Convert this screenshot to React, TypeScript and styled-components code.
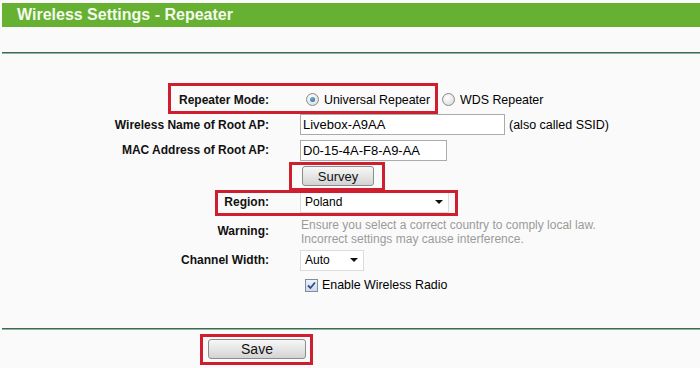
import React from "react";
import styled, { createGlobalStyle } from "styled-components";

const Global = createGlobalStyle`
  html, body { margin: 0; padding: 0; background: #fafafa; }
  body { font-family: "Liberation Sans", Arial, sans-serif; font-size: 12px; color: #000; }
`;

const Page = styled.div`
  position: relative;
  width: 700px;
  height: 368px;
  overflow: hidden;
  background: #fafafa;
`;

const TitleBar = styled.div`
  margin: 3px 0 0 2px;
  height: 24px;
  background: #66b132;
  display: flex;
  align-items: center;
  padding-left: 15px;
  color: #f4faee;
  font-weight: bold;
  font-size: 16px;
`;

const Rule = styled.div<{ $top: number }>`
  margin: ${(p) => p.$top}px 0 0 2px;
  height: 1px;
  border-top: 1px solid #3d6a52;
  background: #8fb39e;
`;

const Form = styled.div`
  margin-top: 33px;
  display: flex;
  flex-direction: column;
`;

const Row = styled.div<{ $h: number }>`
  display: grid;
  grid-template-columns: 269px 1fr;
  column-gap: 31px;
  align-items: center;
  height: ${(p) => p.$h}px;
`;

const Label = styled.div`
  text-align: right;
  font-weight: bold;
  color: #111;
`;

const Value = styled.div`
  display: flex;
  align-items: center;
  gap: 4px;
`;

const RadioGroup = styled.label<{ $first?: boolean }>`
  display: flex;
  align-items: center;
  gap: 5px;
  margin-left: ${(p) => (p.$first ? 6 : 8)}px;
`;

const Radio = styled.span<{ $on?: boolean }>`
  width: 11px;
  height: 11px;
  border-radius: 50%;
  border: 1px solid #8a8a8a;
  background: radial-gradient(circle at 40% 35%, #ffffff, #d6d6d6);
  display: inline-flex;
  align-items: center;
  justify-content: center;
  &::after {
    content: "";
    display: ${(p) => (p.$on ? "block" : "none")};
    width: 5px;
    height: 5px;
    border-radius: 50%;
    background: radial-gradient(circle at 40% 35%, #6fb3e0, #1f5e8e);
  }
`;

const RadioText = styled.span`
  font-size: 12.4px;
`;

const TextInput = styled.div<{ $w: number }>`
  width: ${(p) => p.$w}px;
  height: 21px;
  box-sizing: border-box;
  border: 1px solid #ababab;
  background: #fff;
  display: flex;
  align-items: center;
  padding-left: 2px;
  font-size: 13px;
`;

const Note = styled.span`
  font-size: 12.5px;
`;

const Button = styled.div<{ $w: number; $fs: number }>`
  width: ${(p) => p.$w}px;
  height: 20px;
  box-sizing: border-box;
  border: 1px solid #8c8c8c;
  border-radius: 3px;
  background: linear-gradient(#f7f7f7, #e6e6e6 50%, #d3d3d3);
  display: flex;
  align-items: center;
  justify-content: center;
  font-size: ${(p) => p.$fs}px;
  color: #111;
`;

const Select = styled.div<{ $w: number }>`
  width: ${(p) => p.$w}px;
  height: 21px;
  box-sizing: border-box;
  border: 1px solid #dcdcdc;
  background: #fff;
  display: flex;
  align-items: center;
  justify-content: space-between;
  padding: 0 5px 0 4px;
  font-size: 12px;
`;

const Caret = styled.span`
  width: 0;
  height: 0;
  border-left: 4px solid transparent;
  border-right: 4px solid transparent;
  border-top: 4px solid #111;
`;

const Warning = styled.div`
  color: #9a9a9a;
  line-height: 14px;
  padding-left: 1px;
  padding-top: 2px;
`;

const CheckLabel = styled.label`
  display: flex;
  align-items: center;
  gap: 4px;
  margin-left: 5px;
  font-size: 12.4px;
`;

const Check = styled.span`
  width: 11px;
  height: 11px;
  border: 1px solid #7b8ea6;
  background: linear-gradient(#eef2f8, #cfd9e6);
  display: inline-flex;
  align-items: center;
  justify-content: center;
`;

const Footer = styled.div`
  margin-top: 9px;
  padding-left: 208px;
`;

const Highlight = styled.div<{ $l: number; $t: number; $w: number; $h: number }>`
  position: absolute;
  left: ${(p) => p.$l}px;
  top: ${(p) => p.$t}px;
  width: ${(p) => p.$w}px;
  height: ${(p) => p.$h}px;
  box-sizing: border-box;
  border: 3px solid #cf1f2e;
  pointer-events: none;
`;

export default function App() {
  return (
    <Page>
      <Global />
      <TitleBar>Wireless Settings - Repeater</TitleBar>
      <Rule $top={25} />
      <Form>
        <Row $h={25}>
          <Label>Repeater Mode:</Label>
          <Value>
            <RadioGroup $first>
              <Radio $on />
              <RadioText>Universal Repeater</RadioText>
            </RadioGroup>
            <RadioGroup>
              <Radio />
              <RadioText>WDS Repeater</RadioText>
            </RadioGroup>
          </Value>
        </Row>
        <Row $h={25}>
          <Label>Wireless Name of Root AP:</Label>
          <Value>
            <TextInput $w={205}>Livebox-A9AA</TextInput>
            <Note>(also called SSID)</Note>
          </Value>
        </Row>
        <Row $h={26}>
          <Label>MAC Address of Root AP:</Label>
          <Value>
            <TextInput $w={147}>D0-15-4A-F8-A9-AA</TextInput>
          </Value>
        </Row>
        <Row $h={26}>
          <Label />
          <Value style={{ paddingLeft: 2 }}>
            <Button $w={72} $fs={13}>Survey</Button>
          </Value>
        </Row>
        <Row $h={26}>
          <Label>Region:</Label>
          <Value>
            <Select $w={149}>
              Poland
              <Caret />
            </Select>
          </Value>
        </Row>
        <Row $h={32}>
          <Label>Warning:</Label>
          <Warning>
            Ensure you select a correct country to comply local law.
            <br />
            Incorrect settings may cause interference.
          </Warning>
        </Row>
        <Row $h={26}>
          <Label>Channel Width:</Label>
          <Value>
            <Select $w={64}>
              Auto
              <Caret />
            </Select>
          </Value>
        </Row>
        <Row $h={24}>
          <Label />
          <Value>
            <CheckLabel>
              <Check>
                <svg width="9" height="9" viewBox="0 0 9 9">
                  <path d="M1 4.5 L3.5 7 L8 1.5" fill="none" stroke="#2b4f8c" strokeWidth="1.8" />
                </svg>
              </Check>
              Enable Wireless Radio
            </CheckLabel>
          </Value>
        </Row>
      </Form>
      <Rule $top={31} />
      <Footer>
        <Button $w={98} $fs={14}>Save</Button>
      </Footer>
      <Highlight $l={168} $t={83} $w={270} $h={31} />
      <Highlight $l={289} $t={162} $w={96} $h={29} />
      <Highlight $l={215} $t={190} $w={243} $h={26} />
      <Highlight $l={200} $t={334} $w={113} $h={31} />
    </Page>
  );
}
